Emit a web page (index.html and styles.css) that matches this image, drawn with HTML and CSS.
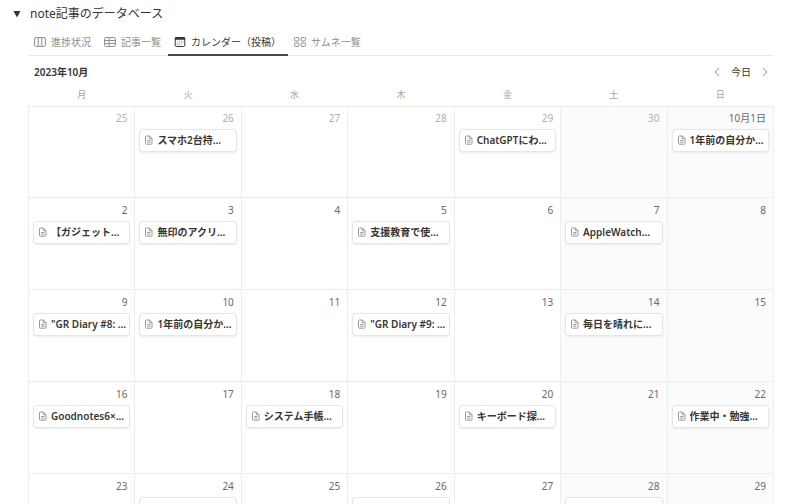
FILE: index.html
```html
<!DOCTYPE html>
<html lang="ja">
<head>
<meta charset="utf-8">
<title>note記事のデータベース</title>
<link rel="stylesheet" href="styles.css">
</head>
<body>
<svg class="symbols" aria-hidden="true">
  <symbol id="page" viewBox="0 0 10 10"><path d="M2.2 1h3.3L8 3.5v5a.7.7 0 0 1-.7.7H2.2a.7.7 0 0 1-.7-.7V1.7a.7.7 0 0 1 .7-.7zM5.3 1v2.7H8M3.2 5.5h3.2M3.2 7.2h3.2"/></symbol>
</svg>
<main class="database">
  <header class="heading">
    <button class="toggle" type="button" aria-label="折りたたむ"><svg viewBox="0 0 8 8"><path d="M.5 1h7L4 7.5z"/></svg></button>
    <h1>note記事のデータベース</h1>
  </header>
  <section class="content">
    <nav class="tabs">
      <a class="tab" href="#progress"><svg viewBox="0 0 12 12"><rect x=".6" y="1.6" width="10.8" height="8.8" rx="1.2"/><path d="M4.2 1.6v8.8M7.8 1.6v8.8"/></svg>進捗状況</a>
      <a class="tab" href="#list"><svg viewBox="0 0 12 12"><rect x=".6" y="1.6" width="10.8" height="8.8" rx="1.2"/><path d="M.6 4.5h10.8M.6 7.5h10.8M5 1.6v8.8"/></svg>記事一覧</a>
      <a class="tab active" href="#calendar"><svg viewBox="0 0 12 12"><rect x="1.2" y="1.5" width="9.6" height="9" rx="1.4"/><path class="solid" d="M.9 3.8V2.4Q.9 1 2.3 1h7.4q1.4 0 1.4 1.4v1.4z"/><path class="dots" d="M5 5.5h4.4M2.7 7h6.7M2.7 8.5h4.4"/></svg>カレンダー（投稿）</a>
      <a class="tab" href="#gallery"><svg viewBox="0 0 12 12"><rect x=".6" y="1.5" width="4.2" height="3.5" rx=".8"/><rect x="7.2" y="1.5" width="4.2" height="3.5" rx=".8"/><rect x=".6" y="7" width="4.2" height="3.5" rx=".8"/><rect x="7.2" y="7" width="4.2" height="3.5" rx=".8"/></svg>サムネ一覧</a>
    </nav>
    <div class="toolbar">
      <h2>2023年10月</h2>
      <div class="pager">
        <button type="button" aria-label="前の月"><svg viewBox="0 0 10 10"><path d="M7 1L3 5l4 4"/></svg></button>
        <button type="button">今日</button>
        <button type="button" aria-label="次の月"><svg viewBox="0 0 10 10"><path d="M3 1l4 4-4 4"/></svg></button>
      </div>
    </div>
    <table class="calendar">
      <thead>
        <tr><th>月</th><th>火</th><th>水</th><th>木</th><th>金</th><th>土</th><th>日</th></tr>
      </thead>
      <tbody>
        <tr>
          <td class="outside"><time>25</time></td>
          <td class="outside"><time>26</time><a class="card" href="#p"><svg><use href="#page"/></svg><span>スマホ2台持...</span></a></td>
          <td class="outside"><time>27</time></td>
          <td class="outside"><time>28</time></td>
          <td class="outside"><time>29</time><a class="card" href="#p"><svg><use href="#page"/></svg><span>ChatGPTにわ...</span></a></td>
          <td class="outside"><time>30</time></td>
          <td><time>10月1日</time><a class="card" href="#p"><svg><use href="#page"/></svg><span>1年前の自分か...</span></a></td>
        </tr>
        <tr>
          <td><time>2</time><a class="card" href="#p"><svg><use href="#page"/></svg><span>【ガジェット...</span></a></td>
          <td><time>3</time><a class="card" href="#p"><svg><use href="#page"/></svg><span>無印のアクリ...</span></a></td>
          <td><time>4</time></td>
          <td><time>5</time><a class="card" href="#p"><svg><use href="#page"/></svg><span>支援教育で使...</span></a></td>
          <td><time>6</time></td>
          <td><time>7</time><a class="card" href="#p"><svg><use href="#page"/></svg><span>AppleWatch...</span></a></td>
          <td><time>8</time></td>
        </tr>
        <tr>
          <td><time>9</time><a class="card" href="#p"><svg><use href="#page"/></svg><span>"GR Diary #8: ...</span></a></td>
          <td><time>10</time><a class="card" href="#p"><svg><use href="#page"/></svg><span>1年前の自分か...</span></a></td>
          <td><time>11</time></td>
          <td><time>12</time><a class="card" href="#p"><svg><use href="#page"/></svg><span>"GR Diary #9: ...</span></a></td>
          <td><time>13</time></td>
          <td><time>14</time><a class="card" href="#p"><svg><use href="#page"/></svg><span>毎日を晴れに...</span></a></td>
          <td><time>15</time></td>
        </tr>
        <tr>
          <td><time>16</time><a class="card" href="#p"><svg><use href="#page"/></svg><span>Goodnotes6×...</span></a></td>
          <td><time>17</time></td>
          <td><time>18</time><a class="card" href="#p"><svg><use href="#page"/></svg><span>システム手帳...</span></a></td>
          <td><time>19</time></td>
          <td><time>20</time><a class="card" href="#p"><svg><use href="#page"/></svg><span>キーボード探...</span></a></td>
          <td><time>21</time></td>
          <td><time>22</time><a class="card" href="#p"><svg><use href="#page"/></svg><span>作業中・勉強...</span></a></td>
        </tr>
        <tr>
          <td><time>23</time></td>
          <td><time>24</time><a class="card" href="#p" aria-label="記事"></a></td>
          <td><time>25</time></td>
          <td><time>26</time><a class="card" href="#p" aria-label="記事"></a></td>
          <td><time>27</time></td>
          <td><time>28</time><a class="card" href="#p" aria-label="記事"></a></td>
          <td><time>29</time></td>
        </tr>
      </tbody>
    </table>
  </section>
</main>
</body>
</html>
```
FILE: styles.css
```css
* { box-sizing: border-box; }

body {
  margin: 0;
  height: 100vh;
  overflow: hidden;
  background: #fff;
  color: #37352f;
  font: 10px/16px "Noto Sans", "Noto Sans CJK JP", sans-serif;
}

h1, h2 { margin: 0; }
a { color: inherit; text-decoration: none; }

button {
  display: flex;
  align-items: center;
  padding: 0;
  border: 0;
  background: none;
  color: inherit;
  font: inherit;
}

svg {
  flex: none;
  fill: none;
  stroke: currentColor;
}

.symbols { display: none; }

.database { padding: 4px 26px 0 13px; }

.heading {
  display: flex;
  align-items: center;
  gap: 9px;
  height: 20px;
}

.heading h1 {
  font-size: 12px;
  font-weight: 400;
}

.toggle svg {
  width: 8px;
  height: 8px;
  fill: currentColor;
  stroke: none;
}

.content { padding-left: 15px; }

.tabs {
  display: flex;
  height: 32px;
  border-bottom: 1px solid #e9e9e7;
  color: #8f8e8a;
}

.tab {
  display: flex;
  align-items: center;
  gap: 5px;
  height: 32px;
  padding: 4px 7px 0 6px;
  white-space: nowrap;
}

.tab svg { width: 12px; height: 12px; }

.tab.active {
  box-shadow: inset 0 -2px #4b4944;
  color: #37352f;
}

.tab .solid { fill: currentColor; stroke: none; }
.tab .dots { stroke-dasharray: 1 1; opacity: .5; }

.toolbar {
  display: flex;
  align-items: center;
  justify-content: space-between;
  height: 32px;
  padding: 0 4px 0 6px;
}

.toolbar h2 {
  font-size: 10px;
  font-weight: 600;
}

.pager {
  display: flex;
  align-items: center;
  gap: 9px;
}

.pager svg {
  width: 10px;
  height: 10px;
  color: #8f8e8a;
}

.calendar {
  width: 100%;
  border-collapse: collapse;
  table-layout: fixed;
}

.calendar th {
  height: 18px;
  padding: 0 0 3px;
  color: #a5a4a0;
  font-size: 9px;
  font-weight: 400;
  line-height: 14px;
}

.calendar td {
  height: 92px;
  padding: 4px 5px;
  border: 1px solid #ededec;
  vertical-align: top;
}

.calendar tbody tr:first-child td {
  height: 91px;
  padding-top: 3px;
}

.calendar td:nth-child(n + 6) { background: #fbfbfb; }

.calendar time {
  display: block;
  padding-right: 2px;
  color: #6b6965;
  text-align: right;
}

.calendar .outside time { color: #b0afab; }

.card {
  display: flex;
  align-items: center;
  gap: 3px;
  height: 21px;
  margin-top: 4px;
  padding: 0 4px;
  overflow: hidden;
  border-radius: 3px;
  background: #fff;
  box-shadow: 0 0 0 1px #e6e6e5, 0 1px 3px #d6d6d4;
  font-weight: 600;
  white-space: nowrap;
}

.card svg {
  width: 10px;
  height: 10px;
  color: #9b9a96;
}
```
